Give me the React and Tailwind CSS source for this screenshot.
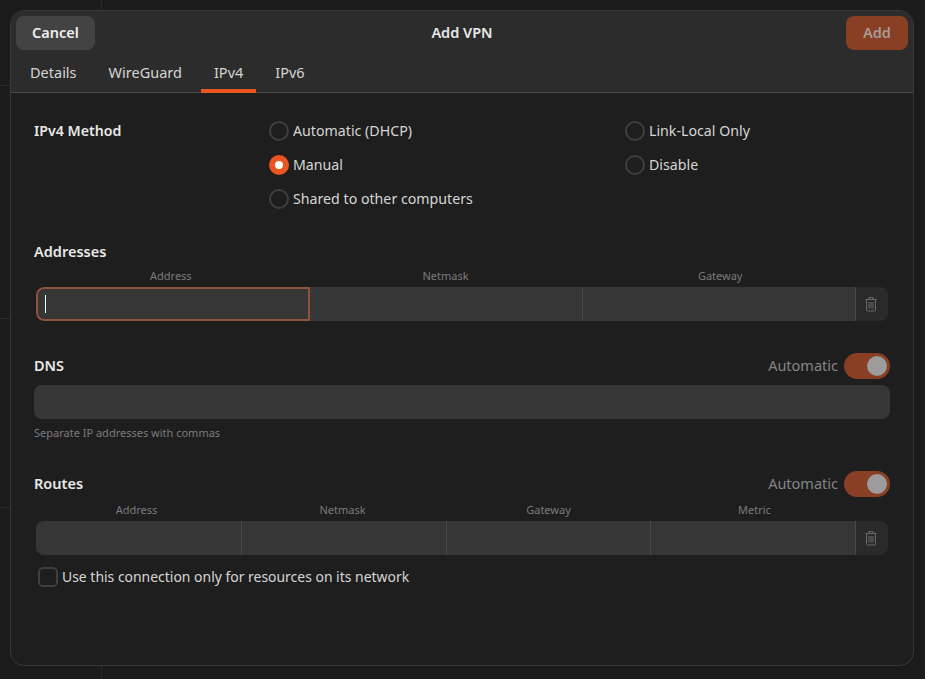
const font = "font-['Noto_Sans','Liberation_Sans',sans-serif]";

function TrashIcon() {
  return (
    <svg width="16" height="16" viewBox="0 0 16 16" fill="none" stroke="#6a6a6a" strokeWidth="1">
      <path d="M2.5 3.5h11M6 3.5v-2h4v2M3.5 3.5v10.5a1 1 0 0 0 1 1h7a1 1 0 0 0 1-1V3.5" />
      <path d="M6 6v6.5M8 6v6.5M10 6v6.5" />
    </svg>
  );
}

function Radio({ label, checked }) {
  return (
    <div className="flex h-[34px] items-center gap-1">
      {checked ? (
        <span className="flex h-5 w-5 items-center justify-center rounded-full bg-[#e95420]">
          <span className="h-2 w-2 rounded-full bg-white" />
        </span>
      ) : (
        <span className="h-5 w-5 rounded-full border-2 border-[#3f3f3f]" />
      )}
      <span className="text-[14.2px] text-[#d6d6d6]">{label}</span>
    </div>
  );
}

function Toggle() {
  return (
    <div className="flex items-center gap-[6px]">
      <span className="text-[#858585]">Automatic</span>
      <div className="flex h-[26px] w-[46px] items-center justify-end rounded-full bg-[#883f24] pr-[3px]">
        <span className="h-5 w-5 rounded-full bg-[#9c9c9c]" />
      </div>
    </div>
  );
}

function EditTable({ cols, focused }) {
  const three = cols.length === 3;
  return (
    <div className="ml-[2px] w-[852px]">
      <div className={`-ml-[2.5px] grid h-[21px] w-[824px] ${three ? "grid-cols-3" : "grid-cols-4"}`}>
        {cols.map((c) => (
          <div key={c} className="text-center text-[11px] leading-[19px] text-[#7b7b7b]">{c}</div>
        ))}
      </div>
      <div className="flex h-[34px] overflow-hidden rounded-lg bg-[#2a2a2a]">
        <div className={`grid flex-1 ${three ? "grid-cols-[274px_273px_1fr]" : "grid-cols-[206px_205px_204px_1fr]"}`}>
          {cols.map((c, i) => (
            <div
              key={c}
              className={
                focused && i === 0
                  ? "flex items-center rounded-l-lg border-2 border-[#8f533d] bg-[#363636] pl-[7px]"
                  : "border-r border-[#4a4a4a] bg-[#363636]"
              }
            >
              {focused && i === 0 && <span className="h-[18px] w-px bg-white" />}
            </div>
          ))}
        </div>
        <div className="flex w-[32px] items-center justify-center pr-[3px]">
          <TrashIcon />
        </div>
      </div>
    </div>
  );
}

export default function App() {
  return (
    <div className={`${font} relative h-[679px] w-[925px] overflow-hidden bg-[#1b1b1b] pl-[10px] pt-[10px] text-[14.5px]`}>
      {/* window behind the dialog */}
      <div className="absolute left-[101px] top-0 h-full w-px bg-[#2a2a2a]" />
      <div className="absolute left-0 top-[85px] h-px w-[101px] bg-[#2a2a2a]" />
      <div className="absolute left-0 top-[318px] h-px w-[101px] bg-[#2a2a2a]" />
      <div className="absolute left-0 top-[507px] h-px w-[101px] bg-[#2a2a2a]" />

      <div className="relative h-[656px] w-[904px] overflow-hidden rounded-[14px] border border-[#383838] bg-[#1e1e1e]">
        <div className="border-b border-[#4a4a4a] bg-[#2c2c2c]">
          <div className="grid h-[45px] grid-cols-[1fr_auto_1fr] items-start px-[5px] pt-[5px]">
            <button className="h-[34px] w-[79px] rounded-lg bg-[#434343] font-semibold text-[#eeeeee]">Cancel</button>
            <span className="mt-[6px] font-semibold text-[#e8e8e8]">Add VPN</span>
            <button className="h-[34px] w-[62px] justify-self-end rounded-lg bg-[#883f24] font-semibold text-[#a89a94]">Add</button>
          </div>
          <div className="-mb-px flex h-[37px] items-stretch gap-[6px] px-[6px] text-[#d4d4d4]">
            {["Details", "WireGuard", "IPv4", "IPv6"].map((t) => (
              <div
                key={t}
                className={
                  t === "IPv4"
                    ? "flex items-center border-b-4 border-[#e95420] px-[13px]"
                    : "flex items-center border-b-4 border-transparent px-[13px]"
                }
              >
                {t}
              </div>
            ))}
          </div>
        </div>

        <div className="px-[23px]">
          <div className="flex pt-[21px]">
            <div className="w-[235px] pt-[7px] text-[14.2px] font-semibold leading-5 text-[#e8e8e8]">IPv4 Method</div>
            <div className="w-[356px]">
              <Radio label="Automatic (DHCP)" />
              <Radio label="Manual" checked />
              <Radio label="Shared to other computers" />
            </div>
            <div>
              <Radio label="Link-Local Only" />
              <Radio label="Disable" />
            </div>
          </div>

          <div className="mb-[5px] mt-[25px] h-[20px] font-semibold leading-5 text-[#e8e8e8]">Addresses</div>
          <EditTable cols={["Address", "Netmask", "Gateway"]} focused />

          <div className="mt-[32px] flex h-[26px] items-center justify-between">
            <span className="font-semibold text-[#e8e8e8]">DNS</span>
            <Toggle />
          </div>
          <div className="mt-[6px] h-[34px] w-[856px] rounded-lg bg-[#363636]" />
          <div className="mt-[7px] text-[11px] leading-[14px] text-[#7b7b7b]">Separate IP addresses with commas</div>

          <div className="mb-[3px] mt-[31px] flex h-[26px] items-center justify-between">
            <span className="font-semibold text-[#e8e8e8]">Routes</span>
            <Toggle />
          </div>
          <EditTable cols={["Address", "Netmask", "Gateway", "Metric"]} />

          <div className="ml-1 mt-3 flex items-center gap-1">
            <span className="h-5 w-5 rounded-[5px] border-2 border-[#3f3f3f]" />
            <span className="text-[13.95px] text-[#d6d6d6]">Use this connection only for resources on its network</span>
          </div>
        </div>
      </div>
    </div>
  );
}
